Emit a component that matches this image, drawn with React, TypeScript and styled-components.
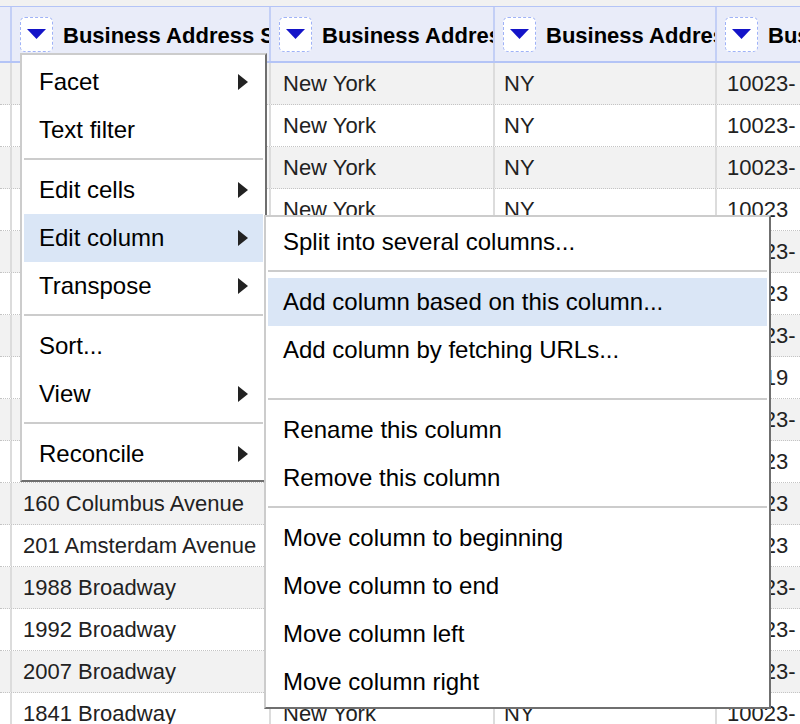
import React from "react";
import styled, { createGlobalStyle } from "styled-components";

const Global = createGlobalStyle`
  html, body { margin: 0; padding: 0; background: #fff; }
  body { font-family: "Liberation Sans", Arial, Helvetica, sans-serif; }
  * { box-sizing: border-box; }
`;

const COLS = "10px 259px 224px 222px 300px";

const Page = styled.div`
  position: relative;
  width: 800px;
  height: 724px;
  overflow: hidden;
  background: #fff;
`;

const TopStrip = styled.div`
  height: 6px;
  background: #f1f1f1;
`;

const HeaderRow = styled.div`
  display: grid;
  grid-template-columns: ${COLS};
  height: 57px;
  background: #e9ecf9;
  border-top: 1px solid #b4c4f6;
  border-bottom: 2px solid #b4c4f6;
`;

const HeaderGutter = styled.div``;

const HeaderCell = styled.div`
  display: flex;
  align-items: center;
  gap: 10px;
  padding-left: 8px;
  border-left: 2px solid #c3cff6;
  overflow: hidden;
  white-space: nowrap;
`;

const DropButton = styled.div`
  flex-shrink: 0;
  width: 33px;
  height: 35px;
  border: 1px dashed #9fb2f7;
  border-radius: 5px;
  background: #fff;
  display: flex;
  align-items: center;
  justify-content: center;
`;

const HeaderTitle = styled.span`
  flex-shrink: 0;
  font-weight: bold;
  font-size: 22px;
  color: #000;
  padding-top: 3px;
`;

const Row = styled.div<{ $odd: boolean }>`
  display: grid;
  grid-template-columns: ${COLS};
  height: 42px;
  background: ${(p) => (p.$odd ? "#f2f2f2" : "#ffffff")};
  border-bottom: 1px dotted #c4c4c4;
`;

const Gutter = styled.div``;

const Cell = styled.div<{ $pad: number }>`
  border-left: 2px solid #dcdcdc;
  padding: 0 ${(p) => p.$pad}px;
  font-size: 22px;
  line-height: 41px;
  color: #222;
  white-space: nowrap;
  overflow: hidden;
`;

const Menu = styled.div<{ $left: number; $top: number; $width: number; $pt: number; $pb: number }>`
  position: absolute;
  left: ${(p) => p.$left}px;
  top: ${(p) => p.$top}px;
  width: ${(p) => p.$width}px;
  background: #fff;
  border: 2px solid #cccccc;
  border-right-color: #6f6f6f;
  border-bottom-color: #6f6f6f;
  padding: ${(p) => p.$pt}px 2px ${(p) => p.$pb}px 2px;
  z-index: 2;
`;

const MenuItem = styled.div<{ $active?: boolean }>`
  height: 48px;
  display: flex;
  align-items: center;
  justify-content: space-between;
  padding: 0 15px 0 15px;
  font-size: 24px;
  color: #000;
  white-space: nowrap;
  background: ${(p) => (p.$active ? "#dae6f6" : "transparent")};
`;

const MenuSpacer = styled.div`
  height: 20px;
`;

const Separator = styled.div`
  height: 2px;
  background: #cccccc;
  margin: 4px 0 6px;
`;

const DownTriangle = () => (
  <svg width="19" height="10" viewBox="0 0 19 10">
    <polygon points="0,0 19,0 9.5,10" fill="#1414c8" />
  </svg>
);

const RightArrow = () => (
  <svg width="10" height="16" viewBox="0 0 10 16">
    <polygon points="0,0 10,8 0,16" fill="#222" />
  </svg>
);

const addresses = [
  "2000 Broadway",
  "2025 Broadway",
  "245 West 72nd Street",
  "170 West 74th Street",
  "2056 Broadway",
  "100 West 72nd Street",
  "2109 Broadway",
  "1995 Broadway",
  "210 West 70th Street",
  "2150 Broadway",
  "160 Columbus Avenue",
  "201 Amsterdam Avenue",
  "1988 Broadway",
  "1992 Broadway",
  "2007 Broadway",
  "1841 Broadway",
];

const zips = [
  "10023-",
  "10023-",
  "10023-",
  "10023",
  "10023-",
  "10023",
  "10023-",
  "10019",
  "10023-",
  "10023",
  "10023",
  "10023",
  "10023-",
  "10023-",
  "10023-",
  "10023-",
];

const headers = [
  "Business Address Street",
  "Business Address City",
  "Business Address State",
  "Business Address Zip",
];

type Item = { label: string; sub?: boolean; active?: boolean } | "sep" | "spacer";

const mainItems: Item[] = [
  { label: "Facet", sub: true },
  { label: "Text filter" },
  "sep",
  { label: "Edit cells", sub: true },
  { label: "Edit column", sub: true, active: true },
  { label: "Transpose", sub: true },
  "sep",
  { label: "Sort..." },
  { label: "View", sub: true },
  "sep",
  { label: "Reconcile", sub: true },
];

const subItems: Item[] = [
  { label: "Split into several columns..." },
  "sep",
  { label: "Add column based on this column...", active: true },
  { label: "Add column by fetching URLs..." },
  "spacer",
  "sep",
  { label: "Rename this column" },
  { label: "Remove this column" },
  "sep",
  { label: "Move column to beginning" },
  { label: "Move column to end" },
  { label: "Move column left" },
  { label: "Move column right" },
];

const renderItems = (items: Item[]) =>
  items.map((it, i) => {
    if (it === "sep") return <Separator key={i} />;
    if (it === "spacer") return <MenuSpacer key={i} />;
    return (
      <MenuItem key={i} $active={it.active}>
        <span>{it.label}</span>
        {it.sub && <RightArrow />}
      </MenuItem>
    );
  });

export default function App() {
  return (
    <Page>
      <Global />
      <TopStrip />
      <HeaderRow>
        <HeaderGutter />
        {headers.map((h) => (
          <HeaderCell key={h}>
            <DropButton>
              <DownTriangle />
            </DropButton>
            <HeaderTitle>{h}</HeaderTitle>
          </HeaderCell>
        ))}
      </HeaderRow>
      {addresses.map((a, i) => (
        <Row key={i} $odd={i % 2 === 0}>
          <Gutter />
          <Cell $pad={11}>{a}</Cell>
          <Cell $pad={12}>New York</Cell>
          <Cell $pad={9}>NY</Cell>
          <Cell $pad={10}>{zips[i]}</Cell>
        </Row>
      ))}
      <Menu $left={20} $top={53} $width={247} $pt={3} $pb={2}>
        {renderItems(mainItems)}
      </Menu>
      <Menu $left={264} $top={215} $width={507} $pt={1} $pb={1}>
        {renderItems(subItems)}
      </Menu>
    </Page>
  );
}
